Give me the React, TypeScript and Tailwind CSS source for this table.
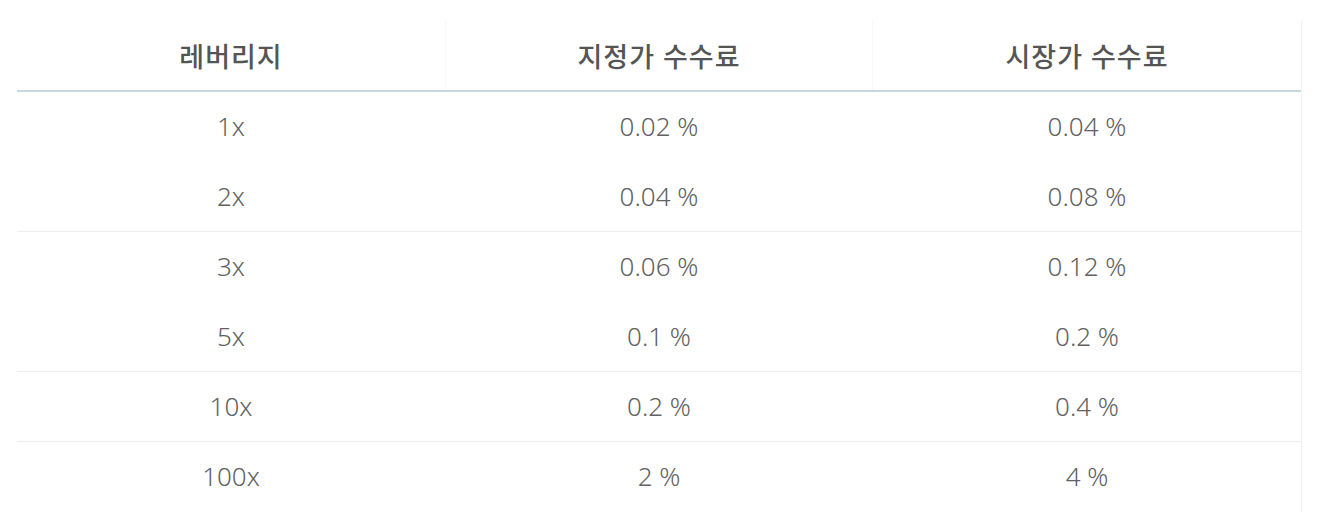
import React from "react";

const rows: { lev: string; limit: string; market: string; line?: boolean }[] = [
  { lev: "1x", limit: "0.02 %", market: "0.04 %" },
  { lev: "2x", limit: "0.04 %", market: "0.08 %", line: true },
  { lev: "3x", limit: "0.06 %", market: "0.12 %" },
  { lev: "5x", limit: "0.1 %", market: "0.2 %", line: true },
  { lev: "10x", limit: "0.2 %", market: "0.4 %", line: true },
  { lev: "100x", limit: "2 %", market: "4 %" },
];

export default function App() {
  return (
    <div
      className="w-[1320px] h-[525px] bg-white overflow-hidden pt-[20px] pl-[17px]"
      style={{ fontFamily: '"Noto Sans", "Noto Sans CJK KR", sans-serif' }}
    >
      <div className="w-[1285px] border-r border-[#f2f2f2]">
        <div className="grid grid-cols-3 h-[72px] border-b-2 border-[#c3d9de] text-[27px] tracking-[1px] font-medium text-[#555555]">
          <div className="flex items-center justify-center pt-[4px]">레버리지</div>
          <div className="flex items-center justify-center pt-[4px] border-x border-[#f8f8f8]">지정가 수수료</div>
          <div className="flex items-center justify-center pt-[4px]">시장가 수수료</div>
        </div>
        {rows.map((r) => (
          <div
            key={r.lev}
            className={
              "grid grid-cols-3 h-[70px] text-[26px] font-light text-[#626262] " +
              (r.line ? "border-b border-[#eeeeee]" : "border-b border-transparent")
            }
          >
            <div className="flex items-center justify-center">{r.lev}</div>
            <div className="flex items-center justify-center">{r.limit}</div>
            <div className="flex items-center justify-center">{r.market}</div>
          </div>
        ))}
      </div>
    </div>
  );
}
